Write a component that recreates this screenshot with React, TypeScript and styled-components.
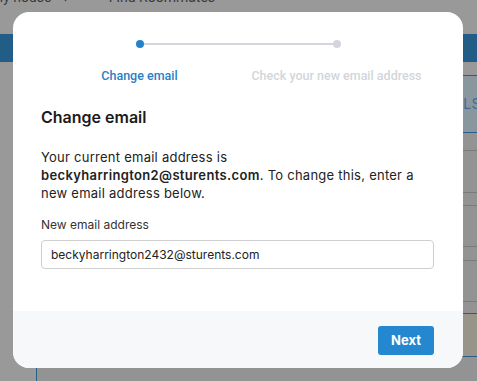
import React from "react";
import styled, { createGlobalStyle } from "styled-components";

const Global = createGlobalStyle`
  html, body { margin: 0; padding: 0; }
  body {
    width: 477px;
    height: 381px;
    overflow: hidden;
    background: #999999;
    font-family: Inter, "Noto Sans", Arial, sans-serif;
  }
  * { box-sizing: border-box; }
`;

/* ---------- dimmed page behind the dialog ---------- */

const Page = styled.div`
  width: 477px;
  height: 381px;
  background: #999999;
  display: flex;
  flex-direction: column;
  overflow: hidden;
`;

const TopNav = styled.div`
  height: 34px;
  display: flex;
  gap: 40px;
  align-items: flex-start;
  margin-left: -9px;
  overflow: hidden;
`;

const NavLink = styled.span`
  margin-top: -11px;
  font-family: Roboto, Arial, sans-serif;
  font-size: 14px;
  color: #3a3a3a;
  white-space: nowrap;
`;

const BlueBar = styled.div`
  height: 28px;
  background: #215d86;
`;

const Content = styled.div`
  flex: 1;
  padding-top: 13px;
  padding-left: 36px;
  display: flex;
  flex-direction: column;
`;

const TableHead = styled.div`
  height: 58px;
  border-top: 1px solid #245f88;
  border-bottom: 1px solid #245f88;
  background: #8a969e;
  display: flex;
  align-items: center;
  justify-content: flex-end;
`;

const HeadText = styled.span`
  font-family: Roboto, Arial, sans-serif;
  font-size: 14px;
  letter-spacing: 1px;
  color: #3d6e96;
  margin-right: -4px;
`;

const Row = styled.div<{ $h: number; $tone?: string; $line?: string }>`
  height: ${(p) => p.$h}px;
  background: ${(p) => p.$tone || "#939393"};
  border-bottom: 1px solid ${(p) => p.$line || "#7b7b7b"};
`;

const Rest = styled.div`
  flex: 1;
  border-left: 1px solid #245f88;
  background: #939393;
`;

/* ---------- dialog ---------- */

const Dialog = styled.div`
  position: absolute;
  left: 13px;
  top: 12px;
  width: 450px;
  height: 356px;
  background: #ffffff;
  border-radius: 16px;
  overflow: hidden;
  display: flex;
  flex-direction: column;
`;

const Body = styled.div`
  flex: 1;
  padding: 28px 29px 0 28px;
  display: flex;
  flex-direction: column;
`;

const Stepper = styled.div`
  align-self: center;
  width: 394px;
  display: grid;
  grid-template-columns: 1fr 1fr;
  position: relative;
  margin-left: 1px;
`;

const Track = styled.div`
  position: absolute;
  left: 98px;
  right: 98px;
  top: 3px;
  height: 2px;
  background: #d3d7dc;
`;

const Step = styled.div`
  display: flex;
  flex-direction: column;
  align-items: center;
  gap: 21px;
  position: relative;
`;

const Dot = styled.span<{ $active?: boolean }>`
  width: 8px;
  height: 8px;
  border-radius: 50%;
  background: ${(p) => (p.$active ? "#2283cc" : "#d3d7dc")};
`;

const StepLabel = styled.span<{ $active?: boolean }>`
  font-family: Roboto, Arial, sans-serif;
  font-weight: 500;
  font-size: 12.5px;
  line-height: 14px;
  white-space: nowrap;
  color: ${(p) => (p.$active ? "#2a80c4" : "#d2d6da")};
`;

const Title = styled.h2`
  margin: 24px 0 0 0;
  font-size: 16px;
  line-height: 20px;
  font-weight: 600;
  color: #1b1b1b;
`;

const Text = styled.p`
  margin: 21px 0 0 0;
  font-size: 13px;
  line-height: 18px;
  letter-spacing: 0.25px;
  color: #222;
  max-width: 393px;
  strong {
    font-weight: 600;
    letter-spacing: 0.35px;
  }
`;

const Label = styled.label`
  margin-top: 15px;
  font-size: 12px;
  line-height: 15px;
  color: #333;
`;

const Input = styled.input`
  margin-top: 8px;
  width: 393px;
  height: 29px;
  border: 1px solid #cfcfcf;
  border-radius: 4px;
  padding: 0 9px;
  font-family: Inter, Arial, sans-serif;
  font-size: 12px;
  color: #222;
  outline: none;
  background: #fff;
`;

const Footer = styled.div`
  height: 57px;
  background: #f7f8fa;
  display: flex;
  align-items: center;
  justify-content: flex-end;
  padding-right: 29px;
  padding-top: 1px;
`;

const Button = styled.button`
  width: 56px;
  height: 29px;
  border: none;
  border-radius: 3px;
  background: #2388cf;
  color: #fff;
  font-family: Inter, Arial, sans-serif;
  font-weight: 700;
  font-size: 13px;
  cursor: pointer;
`;

export default function App() {
  return (
    <>
      <Global />
      <Page>
        <TopNav>
          <NavLink>My house &nbsp;&nbsp;▾</NavLink>
          <NavLink>Find Roommates</NavLink>
        </TopNav>
        <BlueBar />
        <Content>
          <TableHead>
            <HeadText>DETAILS</HeadText>
          </TableHead>
          <Row $h={18} />
          <Row $h={42} />
          <Row $h={13} />
          <Row $h={41} />
          <Row $h={14} />
          <Row $h={41} />
          <Row $h={12} $line="#245f88" />
          <Row $h={43} $tone="#989489" $line="#245f88" />
          <Rest />
        </Content>
      </Page>
      <Dialog>
        <Body>
          <Stepper>
            <Track />
            <Step>
              <Dot $active />
              <StepLabel $active>Change email</StepLabel>
            </Step>
            <Step>
              <Dot />
              <StepLabel>Check your new email address</StepLabel>
            </Step>
          </Stepper>
          <Title>Change email</Title>
          <Text>
            Your current email address is{" "}
            <strong>beckyharrington2@sturents.com</strong>. To change this,
            enter a new email address below.
          </Text>
          <Label htmlFor="new-email">New email address</Label>
          <Input
            id="new-email"
            defaultValue="beckyharrington2432@sturents.com"
          />
        </Body>
        <Footer>
          <Button>Next</Button>
        </Footer>
      </Dialog>
    </>
  );
}
